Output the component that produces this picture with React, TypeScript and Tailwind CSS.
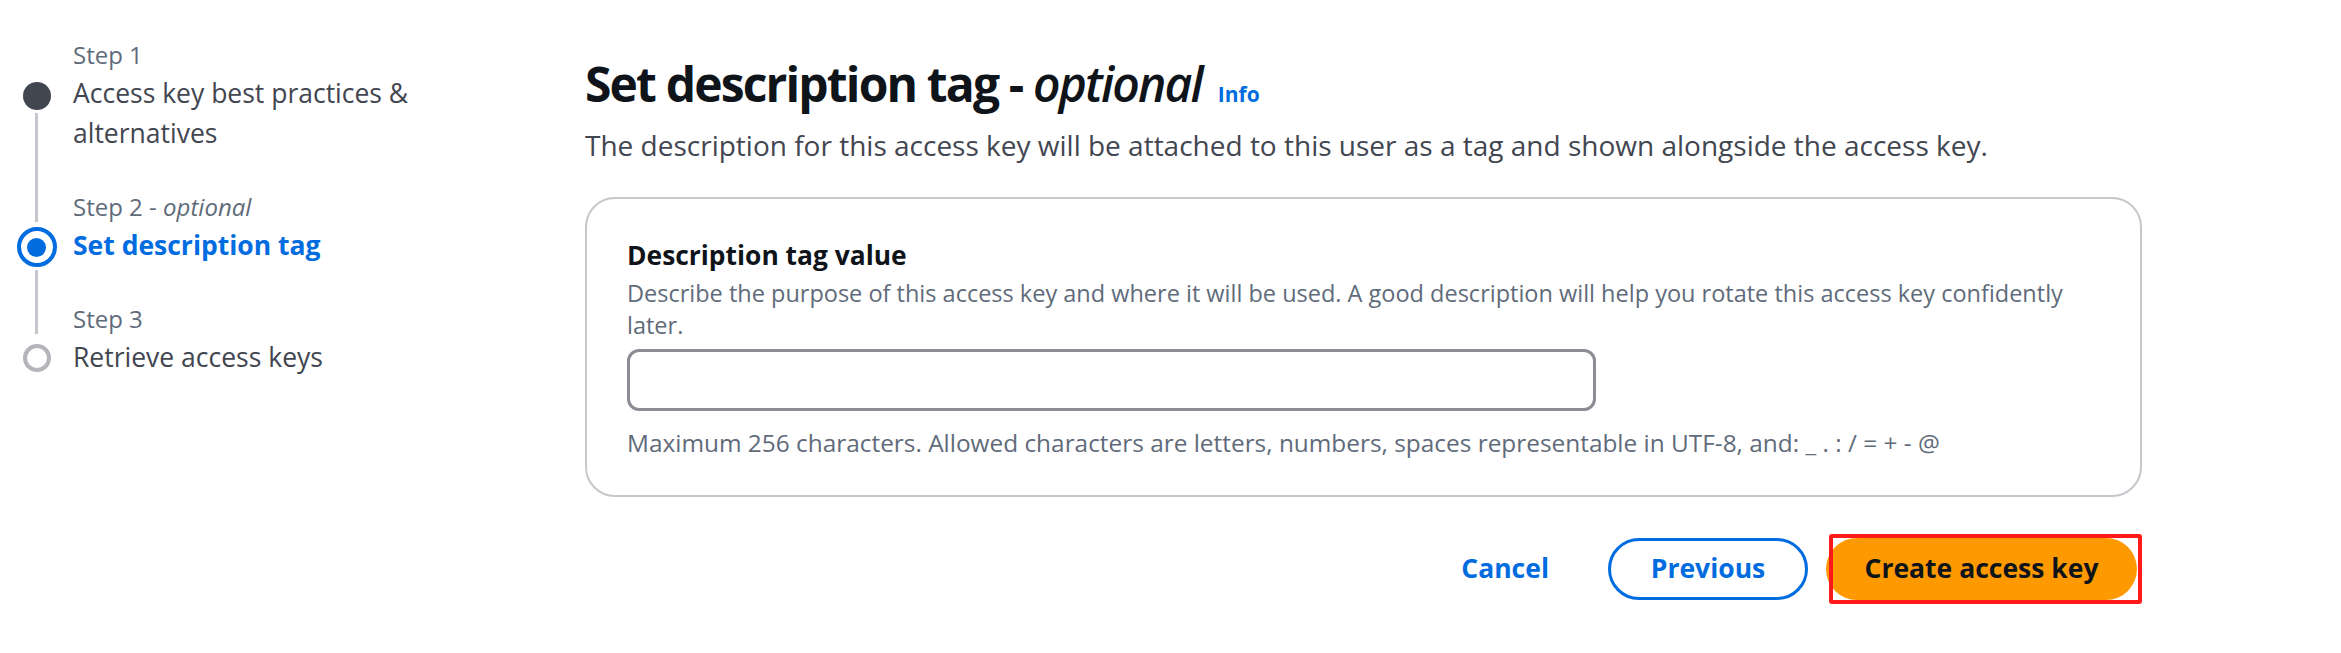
import React from "react";

type Step = {
  label: string;
  optional?: boolean;
  title: string;
  state: "done" | "current" | "todo";
};

const steps: Step[] = [
  { label: "Step 1", title: "Access key best practices & alternatives", state: "done" },
  { label: "Step 2", optional: true, title: "Set description tag", state: "current" },
  { label: "Step 3", title: "Retrieve access keys", state: "todo" },
];

function StepIcon({ state }: { state: Step["state"] }) {
  if (state === "done") {
    return <div className="mt-[9px] h-[28px] w-[28px] shrink-0 rounded-full bg-[#424650]" />;
  }
  if (state === "current") {
    return (
      <div className="mt-[2px] flex h-[40px] w-[40px] shrink-0 items-center justify-center rounded-full border-[4px] border-[#006ce0] bg-white">
        <div className="h-[19px] w-[19px] rounded-full bg-[#006ce0]" />
      </div>
    );
  }
  return <div className="mt-[7px] h-[28px] w-[28px] shrink-0 rounded-full border-[4px] border-[#b4b4bb] bg-white" />;
}

function Wizard() {
  return (
    <nav className="w-[585px] shrink-0 pt-[36px]">
      {steps.map((step, i) => {
        const last = i === steps.length - 1;
        return (
          <div key={step.label} className="flex flex-col">
            <div className="flex">
              <div className="flex w-[73px] justify-center">
                {i > 0 && <div className="mb-[3px] w-[3px] bg-[#c6c6cd]" />}
              </div>
              <div className="text-[24px] leading-[37px] text-[#5f6b7a]">
                {step.label}
                {step.optional && (
                  <>
                    {" - "}
                    <i>optional</i>
                  </>
                )}
              </div>
            </div>
            <div className="flex">
              <div className="flex w-[73px] flex-col items-center">
                <StepIcon state={step.state} />
                {!last && <div className="mt-[3px] w-[3px] flex-1 bg-[#c6c6cd]" />}
              </div>
              <div
                className={`w-[400px] text-[26.5px] leading-[40px] ${last ? "" : "pb-[35px]"} ${
                  step.state === "current" ? "font-bold text-[#006ce0]" : "text-[#424650]"
                }`}
              >
                {step.title}
              </div>
            </div>
          </div>
        );
      })}
    </nav>
  );
}

export default function App() {
  return (
    <div className="flex min-h-[653px] w-[2341px] bg-white font-['Open_Sans',sans-serif]">
      <Wizard />
      <main className="flex w-[1557px] flex-col">
        <div className="mt-[55px] flex items-baseline gap-[16px]">
          <h1 className="text-[48px] font-bold leading-[58px] tracking-[-1.85px] text-[#0f141a]">
            Set description tag - <span className="font-semibold italic">optional</span>
          </h1>
          <a className="text-[21px] font-bold text-[#006ce0]">Info</a>
        </div>
        <p className="mt-[13px] text-[28px] leading-[38px] text-[#424650]">
          The description for this access key will be attached to this user as a tag and shown alongside the access key.
        </p>

        <section className="mt-[33px] rounded-[30px] border-2 border-[#c6c6cd] px-[40px] pb-[36px] pt-[38px]">
          <label className="block text-[26.4px] font-bold leading-[36px] text-[#0f141a]">Description tag value</label>
          <p className="mt-[4px] text-[23.5px] leading-[32px] text-[#5f6b7a]">
            Describe the purpose of this access key and where it will be used. A good description will help you rotate this access key confidently later.
          </p>
          <input
            type="text"
            className="mt-[8px] h-[62px] w-[969px] rounded-[12px] border-[3px] border-[#8c8c94] bg-white px-4 text-[24px] outline-none"
          />
          <p className="mt-[16px] text-[24.4px] leading-[32px] text-[#5f6b7a]">
            Maximum 256 characters. Allowed characters are letters, numbers, spaces representable in UTF-8, and: _ . : / = + - @
          </p>
        </section>

        <div className="mt-[41px] flex items-center justify-end gap-[18px] pr-[5px]">
          <button className="h-[62px] rounded-full px-[41px] text-[26.5px] font-bold text-[#006ce0]">Cancel</button>
          <button className="h-[62px] w-[200px] rounded-full border-[3px] border-[#006ce0] text-[26.5px] font-bold text-[#006ce0]">
            Previous
          </button>
          <div className="relative">
            <button className="h-[62px] w-[311px] rounded-full bg-[#ff9900] text-[26.5px] font-bold text-[#0f141a]">
              Create access key
            </button>
            <div className="pointer-events-none absolute -bottom-[4px] -right-[5px] -top-[4px] left-[3px] rounded-[3px] border-[4px] border-[#ff1a1a]" />
          </div>
        </div>
      </main>
    </div>
  );
}
